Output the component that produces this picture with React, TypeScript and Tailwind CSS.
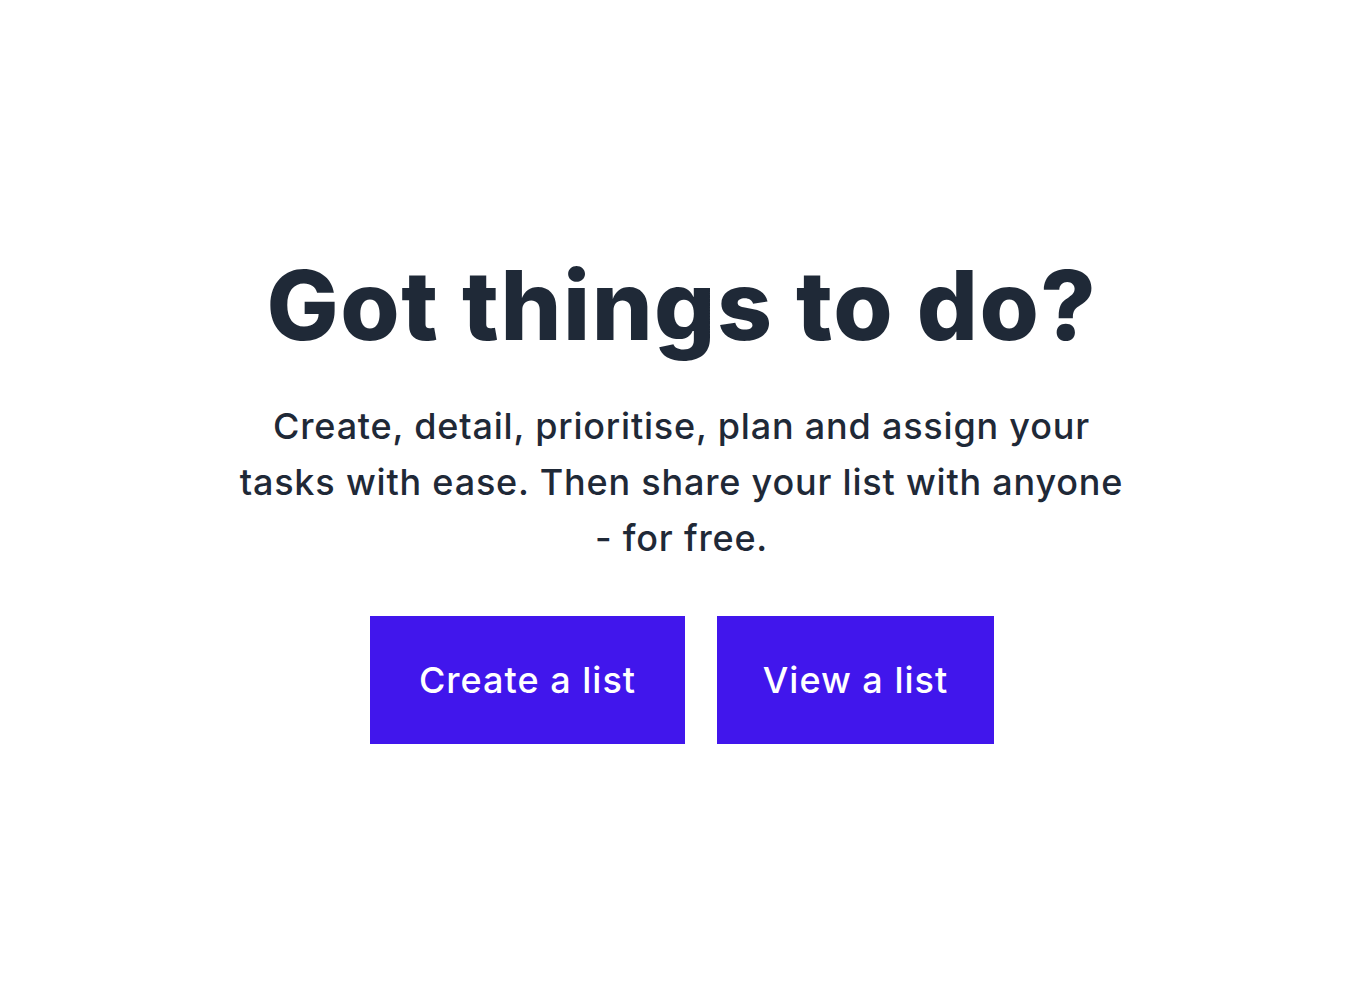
import React from "react";

const App = () => {
  return (
    <main className="min-h-screen w-full bg-white flex flex-col items-center justify-center pb-2 font-['Inter',sans-serif] text-[#1f2937]">
      <h1 className="ml-[4px] text-[96px] leading-[110px] font-extrabold tracking-[1.5px] text-center">
        Got things to do?
      </h1>
      <p className="mt-[38px] ml-[3px] text-[36px] leading-[56px] font-medium text-center tracking-[0.8px]">
        Create, detail, prioritise, plan and assign your
        <br />
        tasks with ease. Then share your list with anyone
        <br />- for free.
      </p>
      <div className="mt-[50px] ml-[4px] flex flex-row gap-8">
        <button className="h-[128px] w-[315px] bg-[#4116ec] text-white text-[36px] font-medium tracking-[1px]">
          Create a list
        </button>
        <button className="h-[128px] w-[277px] bg-[#4116ec] text-white text-[36px] font-medium tracking-[1px]">
          View a list
        </button>
      </div>
    </main>
  );
};

export default App;
